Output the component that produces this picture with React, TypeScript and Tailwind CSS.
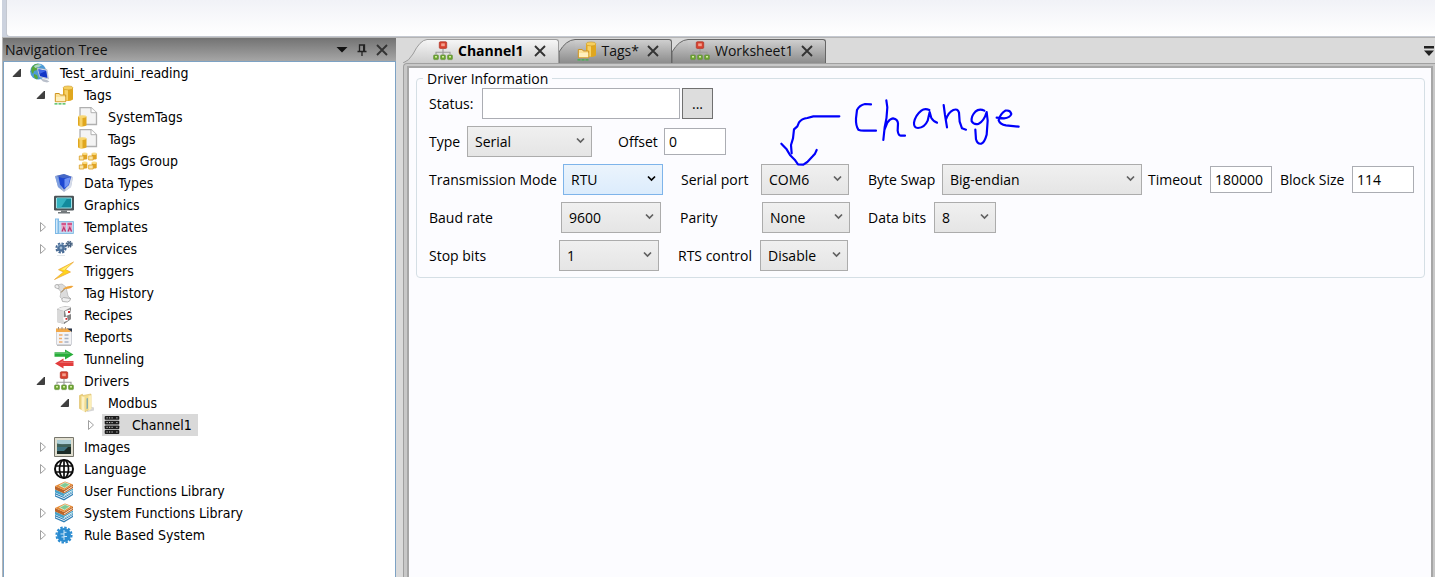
import type { ReactNode } from "react";

/* ---------- icons ---------- */

function Icon({ children }: { children: ReactNode }) {
  return (
    <svg viewBox="0 0 20 20" className="size-5 shrink-0" aria-hidden="true">
      {children}
    </svg>
  );
}

const globeIcon = (
  <Icon>
    <circle cx="8.200" cy="8.500" r="8" fill="#4c9ad6" />
    <path d="M2 4q3-4 7-3l2 2-3 1-1 3-3 1-1 3q-3-3-1-7zM4 11l3 1 1 3-1 1.500q-4-2-3-5.500z" fill="#56a73a" />
    <path d="M4 3q4-3 8-1l-3 2-4 1z" fill="#cfeaff" opacity=".7" />
    <path d="M7 5l10 1.600 1.500 9.400-9-2z" fill="#e7ecf4" stroke="#9fa9bb" strokeWidth=".6" />
    <path d="M8.300 6.300l8 1.400 1.200 7.300-7.500-1.700z" fill="#1236c6" />
    <path d="M8.300 6.300l8 1.400-7 3.300z" fill="#3e67e8" />
    <path d="M10 15.500l6.500 1.200 3 1.800-2.500 1-4-1z" fill="#b9bfca" />
  </Icon>
);

const tagsIcon = (
  <Icon>
    <path d="M9 3v11.500q5 3 10 0V3z" fill="#e0a71f" />
    <path d="M10.500 3.500v12h3.500V4z" fill="#f7d268" />
    <ellipse cx="14" cy="2.900" rx="5" ry="2" fill="#f6cf5e" stroke="#c08a18" strokeWidth=".5" />
    <path d="M1.300 8.500h4l1 1.500h5.400v6.700H1.300z" fill="#fbe29a" stroke="#cf9420" />
    <path d="M2 12h9.200v4.200H2z" fill="#fff0bd" />
    <path d="M.5 18.800h11.500" stroke="#39b54a" strokeWidth="1.300" strokeDasharray="3 1" />
  </Icon>
);

const tagFileIcon = (
  <Icon>
    <path d="M2 .7h11l5.500 5V17.500H2z" fill="#f4f4f4" stroke="#b0b0b0" strokeWidth="1.300" />
    <path d="M13 .7v5h5.500" fill="#fff" stroke="#b0b0b0" />
    <path d="M0 9.500v9q4 2 8.500 0v-9z" fill="#e0a71f" />
    <path d="M1.500 10v9.300h3V10z" fill="#f7d268" />
    <ellipse cx="4.300" cy="9.600" rx="4.200" ry="1.300" fill="#f8d774" />
  </Icon>
);

const cluster = (x: number, y: number) => (
  <g key={`${x}-${y}`} transform={`translate(${x} ${y})`}>
    <path d="M3.500 1.500v5.500q2.500 1 5 0V1.500z" fill="#e0a321" />
    <ellipse cx="6" cy="1.700" rx="2.500" ry="1.200" fill="#f9dc82" />
    <path d="M.5 4H5v4H.5z" fill="#fbe6a5" stroke="#d99d25" strokeWidth=".8" />
  </g>
);

const tagsGroupIcon = (
  <Icon>
    {cluster(0.8, 1)}
    {cluster(10.2, 1)}
    {cluster(0.8, 10)}
    {cluster(10.2, 10)}
  </Icon>
);

const dataTypesIcon = (
  <Icon>
    <path d="M1 3l9-2 9 3-2 10-7 5-6-5z" fill="#a9b6d3" />
    <path d="M1 3l5 2 2 12-4-3z" fill="#7fa0e0" />
    <path d="M15 5l4-1-2 10-6 4z" fill="#d5dbe8" />
    <path d="M4.500 4l6-2 6.500 2-2 8-5 4.500-4-5z" fill="#1c46d2" />
    <path d="M10.500 6l6-2-2 8-4 3z" fill="#6f92f3" />
    <path d="M2 3l8-2 8 3-9 1.200z" fill="#4668c6" />
  </Icon>
);

const monitorIcon = (
  <Icon>
    <rect y=".8" width="20" height="14.700" rx="1.200" fill="#4b5357" />
    <path d="M2.500 3h15v10h-15z" fill="#138a9c" stroke="#9fe1e6" />
    <path d="M3 3.500h10l-6 9H3z" fill="#35b3c1" />
    <path d="M7 15.500h6V17h3v1.500H4V17h3z" fill="#73797c" />
  </Icon>
);

const templatesIcon = (
  <Icon>
    <path d="M4 4.500h15.500v12H4z" fill="#b9dcf5" stroke="#8fc1e5" />
    <path d="M1 1.500h4V17H1z" fill="#7db9e6" />
    <path d="M2.200 2.500h1.200v13.500H2.200z" fill="#e8f5ff" />
    <path d="M7.500 5.500h4.500v9H7.500zM13.500 5.500H18v9h-4.500z" fill="#eba0c0" />
    <path d="M7.500 7h4.500M13.500 7H18" stroke="#c93f7a" strokeWidth="1.500" />
    <path d="M8 14.500l1.800-4 1.800 4M14 14.500l1.800-4 1.800 4" stroke="#b5386f" fill="none" strokeWidth="1.200" />
  </Icon>
);

const servicesIcon = (
  <Icon>
    <circle cx="7" cy="9" r="3.800" fill="#4d7099" />
    <circle cx="7" cy="9" r="4.600" fill="none" stroke="#476a94" strokeWidth="2" strokeDasharray="2.300 1.300" />
    <circle cx="7" cy="9" r="1.400" fill="#a3bcd5" />
    <path d="M3.500 8q1.500-3 5-3" stroke="#8fb1d2" fill="none" />
    <circle cx="15.200" cy="5.300" r="2.300" fill="#46607f" />
    <circle cx="15.200" cy="5.300" r="2.800" fill="none" stroke="#46607f" strokeWidth="1.500" strokeDasharray="1.400 .8" />
    <circle cx="15.200" cy="5.300" r=".8" fill="#9fb7ce" />
    <path d="M3 16.500h8" stroke="#e2e7eb" />
  </Icon>
);

const boltIcon = (
  <Icon>
    <path d="M19.500 1L4.500 8.700l5 2.300L.5 18.500 16.500 11 11.500 8.500z" fill="#ffd41c" stroke="#e9a33b" strokeWidth=".7" />
    <path d="M17.500 2.500L7 8.500l3.500.5z" fill="#ffee70" />
  </Icon>
);

const historyIcon = (
  <Icon>
    <path d="M2 2l6-1 4 3 2 9 3 3-7 2-4-4 1-5-3-4z" fill="#dcdcdc" stroke="#b3b3b3" strokeWidth=".7" />
    <path d="M1 4.500q-1-3 2-3 3 1 1.500 4.500zM8.500 18.500q-2-3 1-4l7 1q0 3-3 3.500z" fill="#efefef" stroke="#9c9c9c" strokeWidth=".7" />
    <path d="M9 5.500q5-3.500 10.500-2.500-3 3.500-9.500 3z" fill="#f0a63c" />
    <path d="M7 9.500l3.500-3.500" stroke="#8b6a3c" />
  </Icon>
);

const recipesIcon = (
  <Icon>
    <path d="M3 4q5-4 14-2v12l-7 5-7-2z" fill="#a9a9a9" />
    <path d="M3 4.500l7 1.500v13l-7-2z" fill="#d9d9d9" />
    <path d="M10 6l7-3v11l-7 5z" fill="#858585" />
    <path d="M11 6l5-1.500 1 4.500-5 2zM9 12.500l4-1 1 4-4 1.500z" fill="#fff" />
    <path d="M14 6h2v2h-2zM11.500 13h1.700v1.700h-1.700z" fill="#d6252b" />
    <path d="M3 4q5-3 14-2l-7 4z" fill="#f0f0f0" />
  </Icon>
);

const reportsIcon = (
  <Icon>
    <path d="M2.500 2h15v15.500h-15z" fill="#f3f3f5" stroke="#d0d2d8" />
    <path d="M2 1.500h12l3 3.500H2z" fill="#f2a94a" />
    <path d="M4.500 0v2.500M8 0v2.500M11.500 0v2.500" stroke="#a18f7d" />
    <path d="M13 1.500h5V5z" fill="#2a3446" />
    <path d="M5 8h3.500M5 11.500h3M5 15h3.500" stroke="#f0ac6b" strokeWidth="1.400" />
    <path d="M10.500 8h4M10.500 11.500h4M10.500 15h4" stroke="#a9b3c4" strokeWidth="1.400" />
    <path d="M3 18.500h14" stroke="#bcbcbc" />
  </Icon>
);

const tunnelingIcon = (
  <Icon>
    <path d="M.5 3.300H11V.5l8.500 5-8.500 5V7.700H.5z" fill="#28ad3a" />
    <path d="M19.500 12H9.500V9.500L1 14.500l8.500 5V17h10z" fill="#e23c3c" />
    <path d="M.5 3.800H11.500V2l5 3H.5zM19.500 12.800H9v-1.500L5 14h14.500z" fill="#fff" opacity=".22" />
  </Icon>
);

const driversIcon = (
  <Icon>
    <path d="M10 8v3M3 13.500V11.300h14v2.200M10 11v3" fill="none" stroke="#9a9a9a" strokeWidth="1.100" />
    <rect x="6.300" y=".8" width="7.400" height="6.600" rx="1" fill="#d8412f" stroke="#b23a2c" strokeWidth=".8" />
    <rect x="8.200" y="2.400" width="3.600" height="2.800" fill="#f4a28f" />
    {[0.6, 7.6, 14.6].map((x) => (
      <g key={x}>
        <rect x={x} y="14" width="4.800" height="4.600" rx=".8" fill="#6aa52e" stroke="#6a9143" strokeWidth=".7" />
        <rect x={x + 1.4} y="15" width="2" height="1.600" fill="#d3ec9f" />
      </g>
    ))}
  </Icon>
);

const folderIcon = (
  <Icon>
    <path d="M10 13l6 1.500v3l-7 1.500z" fill="#d5d5d5" />
    <path d="M1.500 2.500l3-1.300V17l-3-1.500z" fill="#ecd07a" stroke="#dcbc62" strokeWidth=".6" />
    <path d="M5 2.500l8-1.500v14l-6 4z" fill="#f4dd8d" stroke="#d9bb66" strokeWidth=".6" />
    <path d="M8.500 5.500l1.500-.5v10.500l-1.500.7z" fill="#86acab" />
    <path d="M10.500 3l3-1v14l-3 2z" fill="#fbeeb8" />
    <path d="M3.500 3l3 1v15l-3-2z" fill="#fdf2c4" />
  </Icon>
);

const serverIcon = (
  <Icon>
    {[1, 5.7, 10.4, 15.1].map((y) => (
      <g key={y}>
        <rect x="2.700" y={y} width="14.600" height="3.800" rx=".9" fill="#1c1c1c" />
        <path
          d={`M4.500 ${y + 1.9}h1.200M7 ${y + 1.9}h1.200M9.500 ${y + 1.9}h1.200M14.300 ${y + 1.9}h1.200`}
          stroke="#d6d6d6"
        />
      </g>
    ))}
  </Icon>
);

const imagesIcon = (
  <Icon>
    <path d="M.5.5h19v19H.5z" fill="#e0decf" stroke="#77766c" />
    <path d="M3 3h14v14H3z" fill="#1c2c27" />
    <path d="M3 3h14v4.500H3z" fill="#a9cdd6" />
    <path d="M3 6.500l5 1 9-.5V10H3z" fill="#40635a" />
    <path d="M3 10h11l-4 4H3z" fill="#3f7380" />
  </Icon>
);

const languageIcon = (
  <Icon>
    <g fill="none" stroke="#0b0b0b" strokeWidth="1.700">
      <circle cx="10" cy="10" r="9" strokeWidth="2" />
      <ellipse cx="10" cy="10" rx="4.500" ry="9" />
      <path d="M10 1v18M1 7h18M1 13h18" />
    </g>
  </Icon>
);

const libraryIcon = (
  <Icon>
    <path d="M1 12l9 4 9-5v3l-9 5.500-9-4z" fill="#2f7fb5" />
    <path d="M1.500 14l8.500 3.500 8.500-5" stroke="#e8f3fa" fill="none" />
    <path d="M1 8.500l9 4 9-5v3l-9 5-9-4z" fill="#48a3c9" />
    <path d="M10 14.500l8.500-5" stroke="#f3f8fb" fill="none" />
    <path d="M1 5l9 4 9-5.500v3.500l-9 5.500-9-4z" fill="#b9652b" />
    <path d="M10 11l8.500-5.500" stroke="#fbe6cf" fill="none" />
    <path d="M1 5l10-4.500 8 3L10 9z" fill="#e88c38" />
    <path d="M5.500 4.500l5.500-3 5 2-5.500 3.500z" fill="#7fca95" stroke="#e7f6e4" strokeWidth=".7" />
  </Icon>
);

const ruleIcon = (
  <Icon>
    <circle cx="10" cy="10" r="7" fill="#2a8bd0" />
    <circle cx="10" cy="10" r="7.600" fill="none" stroke="#2a8bd0" strokeWidth="2" strokeDasharray="2.400 1.580" />
    <path d="M10 5v10M6.500 9h3.500M10 7.300h2.500M10 11.500h3M7.500 12h2.500" stroke="#cfe7f8" />
  </Icon>
);

const CloseGlyph = () => (
  <svg viewBox="0 0 12 12" className="size-3" aria-hidden="true">
    <path d="M1 1l10 10M11 1L1 11" stroke="#333" strokeWidth="1.900" />
  </svg>
);

/* ---------- navigation tree ---------- */

type Node = {
  label: string;
  icon: ReactNode;
  level: 0 | 1 | 2 | 3;
  state?: "open" | "closed";
  selected?: boolean;
};

const nodes: Node[] = [
  { label: "Test_arduini_reading", icon: globeIcon, level: 0, state: "open" },
  { label: "Tags", icon: tagsIcon, level: 1, state: "open" },
  { label: "SystemTags", icon: tagFileIcon, level: 2 },
  { label: "Tags", icon: tagFileIcon, level: 2 },
  { label: "Tags Group", icon: tagsGroupIcon, level: 2 },
  { label: "Data Types", icon: dataTypesIcon, level: 1 },
  { label: "Graphics", icon: monitorIcon, level: 1 },
  { label: "Templates", icon: templatesIcon, level: 1, state: "closed" },
  { label: "Services", icon: servicesIcon, level: 1, state: "closed" },
  { label: "Triggers", icon: boltIcon, level: 1 },
  { label: "Tag History", icon: historyIcon, level: 1 },
  { label: "Recipes", icon: recipesIcon, level: 1 },
  { label: "Reports", icon: reportsIcon, level: 1 },
  { label: "Tunneling", icon: tunnelingIcon, level: 1 },
  { label: "Drivers", icon: driversIcon, level: 1, state: "open" },
  { label: "Modbus", icon: folderIcon, level: 2, state: "open" },
  { label: "Channel1", icon: serverIcon, level: 3, state: "closed", selected: true },
  { label: "Images", icon: imagesIcon, level: 1, state: "closed" },
  { label: "Language", icon: languageIcon, level: 1, state: "closed" },
  { label: "User Functions Library", icon: libraryIcon, level: 1 },
  { label: "System Functions Library", icon: libraryIcon, level: 1, state: "closed" },
  { label: "Rule Based System", icon: ruleIcon, level: 1, state: "closed" },
];

const indents = ["pl-2", "pl-8", "pl-14", "pl-20"];

function TreeRow({ node }: { node: Node }) {
  return (
    <li className={`flex h-[22px] items-center ${indents[node.level]}`}>
      <span className="w-[18px] shrink-0">
        {node.state === "open" && (
          <svg viewBox="0 0 10 10" className="size-[10px]" aria-hidden="true">
            <path d="M8.500 1v7.500H1z" fill="#404040" stroke="#262626" strokeWidth=".8" />
          </svg>
        )}
        {node.state === "closed" && (
          <svg viewBox="0 0 10 10" className="size-[10px]" aria-hidden="true">
            <path d="M4.500 .5v9L9.500 5z" fill="#fff" stroke="#a0a0a0" />
          </svg>
        )}
      </span>
      <button
        type="button"
        className={`flex h-[22px] items-center gap-[10px] pr-[6px] whitespace-nowrap ${
          node.selected ? "bg-[#d9d9d9]" : ""
        }`}
      >
        {node.icon}
        {node.label}
      </button>
    </li>
  );
}

function NavigationPanel() {
  return (
    <aside className="ml-[3px] flex w-[393px] shrink-0 flex-col">
      <header className="flex h-[23px] items-center bg-linear-to-b from-[#737373] to-[#a6a6a6] pt-px pr-2 pl-[2px]">
        <h2 className="flex-1 text-[14px] leading-5 text-[#111]">Navigation Tree</h2>
        <div className="flex items-center gap-2">
          <button type="button" aria-label="Panel menu">
            <svg viewBox="0 0 12 12" className="size-3" aria-hidden="true">
              <path d="M.5 3h11L6 8.500z" fill="#111" />
            </svg>
          </button>
          <button type="button" aria-label="Pin panel">
            <svg viewBox="0 0 12 12" className="size-3" aria-hidden="true">
              <path d="M3.500 7V1h5v6M1.500 7.500h9M6 8v4" fill="none" stroke="#222" strokeWidth="1.300" />
              <path d="M7 1h1.500v6H7z" fill="#222" />
            </svg>
          </button>
          <button type="button" aria-label="Close panel">
            <CloseGlyph />
          </button>
        </div>
      </header>
      <nav aria-label="Project" className="flex-1 border-x border-t border-[#7da2c4] bg-white">
        <ul className="font-['DejaVu_Sans_Condensed','Noto_Sans',sans-serif] text-[14px] leading-5 text-black">
          {nodes.map((n, i) => (
            <TreeRow key={i} node={n} />
          ))}
        </ul>
      </nav>
    </aside>
  );
}

/* ---------- document tabs ---------- */

function Tab({ label, icon, active = false }: { label: string; icon: ReactNode; active?: boolean }) {
  const id = active ? "slope-active" : `slope-${label.length}`;
  return (
    <div className="flex h-6">
      <svg
        viewBox={active ? "0 0 24 24" : "0 0 16 24"}
        className={active ? "h-6 w-6" : "h-6 w-4"}
        aria-hidden="true"
      >
        <defs>
          <linearGradient id={id} x1="0" y1="0" x2="0" y2="24" gradientUnits="userSpaceOnUse">
            <stop stopColor={active ? "#f6f6f6" : "#cfcfcf"} />
            <stop offset="1" stopColor={active ? "#cdcdcd" : "#8c8c8c"} />
          </linearGradient>
        </defs>
        <path
          d={active ? "M0 24Q6 22 10 15Q17 1 24 .5V24z" : "M0 24V13Q7 1 16 .5V24z"}
          fill={`url(#${id})`}
        />
        <path
          d={active ? "M0 24Q6 22 10 15Q17 1 24 .5" : "M0 24V13Q7 1 16 .5"}
          fill="none"
          stroke={active ? "#9c9c9c" : "#666"}
        />
      </svg>
      <div
        className={`flex items-center rounded-tr-[3px] border-t border-r pr-3 pb-[2px] ${
          active
            ? "gap-[10px] border-[#9c9c9c] bg-linear-to-b from-[#f6f6f6] to-[#cdcdcd] pl-[6px]"
            : "gap-2 border-[#666] bg-linear-to-b from-[#cfcfcf] to-[#8c8c8c] pl-[2px]"
        }`}
      >
        <button
          type="button"
          className={`flex items-center gap-[5px] text-[14px] leading-5 ${active ? "font-bold text-black" : "text-[#111]"}`}
        >
          {icon}
          {label}
        </button>
        <button type="button" aria-label={`Close ${label}`}>
          <CloseGlyph />
        </button>
      </div>
    </div>
  );
}

/* ---------- form controls ---------- */

function Label({ id, text, width }: { id: string; text: string; width: string }) {
  return (
    <label htmlFor={id} className={`${width} shrink-0 whitespace-nowrap`}>
      {text}
    </label>
  );
}

function Select({ id, value, width, hot = false }: { id: string; value: string; width: string; hot?: boolean }) {
  return (
    <span className={`relative h-[31px] shrink-0 ${width}`}>
      <select
        id={id}
        defaultValue={value}
        className={`h-full w-full appearance-none border pl-[7px] ${
          hot
            ? "border-[#7eb4ea] bg-linear-to-b from-[#ebf4fc] to-[#dcecfc]"
            : "border-[#acacac] bg-linear-to-b from-[#f0f0f0] to-[#e5e5e5]"
        }`}
      >
        <option>{value}</option>
      </select>
      <svg viewBox="0 0 10 8" className="pointer-events-none absolute top-[11px] right-[6px] h-2 w-[10px]" aria-hidden="true">
        <path d="M1 1.500L4.500 5 8 1.500" fill="none" stroke={hot ? "#000" : "#606060"} strokeWidth="1.700" />
      </svg>
    </span>
  );
}

function NumberBox({ id, value }: { id: string; value: string }) {
  return (
    <input
      id={id}
      defaultValue={value}
      className="h-[27px] w-[62px] shrink-0 border border-[#abadb3] bg-white pl-1"
    />
  );
}

const Row = ({ children }: { children: ReactNode }) => <div className="flex h-[31px] items-center">{children}</div>;

function InkNote() {
  return (
    <svg
      viewBox="321 21 735 213"
      role="img"
      aria-label="Handwritten note: Change"
      className="pointer-events-none absolute top-2 left-[360px] h-[71px] w-[245px]"
    >
      <g fill="none" stroke="#0000fb" strokeWidth="6.500" strokeLinecap="round" strokeLinejoin="round">
        <path d="M508 79H430L412 84Q395 86 387 97L382 109 372 118 369 145 363 165 365 190" />
        <path d="M334 161L350 178 360 195 374 209 384 223 400 224 412 216 428 199 435 191 440 180" />
        <path d="M603 43L585 42Q568 46 561 60L558 85Q557 106 565 119 571 122 582 122H618" />
        <path d="M649 31L652 52Q651 85 644 112L640 150M643 120L652 98Q660 86 669 85 683 87 684 100L683 122Q685 137 692 137H705" />
        <path d="M778 60Q764 54 754 62 736 76 732 98 731 114 744 114 764 113 773 92L779 66 784 84Q792 96 801 98" />
        <path d="M821 45L825 75 831 112M828 88Q836 66 850 60 863 55 867 68L869 95 876 115 888 119" />
        <path d="M943 62Q928 54 916 65 903 78 905 94 911 105 925 102 942 94 950 66L953 92 950 134Q943 159 934 161 922 163 918 148L916 119" />
        <path d="M980 83L1002 85Q1020 84 1024 72 1021 59 1006 62 990 72 986 91 990 103 1008 106L1046 110" />
      </g>
    </svg>
  );
}

function DriverForm() {
  return (
    <fieldset className="relative mr-[6px] ml-[7px] min-w-0 rounded-[4px] border border-[#d5dfe5] pb-[6px] pl-3">
      <legend className="-ml-[6px] h-[21px] px-1 leading-[22px]">Driver Information</legend>
      <div className="-mt-[1px] flex flex-col gap-[7px]">
        <Row>
          <Label id="status" text="Status:" width="w-[53px]" />
          <input id="status" className="h-[31px] w-[198px] border border-[#abadb3] bg-white px-1" />
          <button type="button" aria-label="Browse status" className="ml-[2px] h-[31px] w-[31px] border border-[#707070] bg-[#dddddd]">
            ...
          </button>
        </Row>
        <Row>
          <Label id="type" text="Type" width="w-[38px]" />
          <Select id="type" value="Serial" width="w-[125px]" />
          <span className="w-[26px]" />
          <Label id="offset" text="Offset" width="w-[46px]" />
          <NumberBox id="offset" value="0" />
        </Row>
        <Row>
          <Label id="mode" text="Transmission Mode" width="w-[134px]" />
          <Select id="mode" value="RTU" width="w-[100px]" hot />
          <span className="w-[18px]" />
          <Label id="port" text="Serial port" width="w-[80px]" />
          <Select id="port" value="COM6" width="w-[88px]" />
          <span className="w-[19px]" />
          <Label id="swap" text="Byte Swap" width="w-[74px]" />
          <Select id="swap" value="Big-endian" width="w-[200px]" />
          <span className="w-[6px]" />
          <Label id="timeout" text="Timeout" width="w-[62px]" />
          <NumberBox id="timeout" value="180000" />
          <span className="w-2" />
          <Label id="block" text="Block Size" width="w-[72px]" />
          <NumberBox id="block" value="114" />
        </Row>
        <Row>
          <Label id="baud" text="Baud rate" width="w-[132px]" />
          <Select id="baud" value="9600" width="w-[100px]" />
          <span className="w-[19px]" />
          <Label id="parity" text="Parity" width="w-[82px]" />
          <Select id="parity" value="None" width="w-[88px]" />
          <span className="w-[18px]" />
          <Label id="databits" text="Data bits" width="w-[66px]" />
          <Select id="databits" value="8" width="w-[62px]" />
        </Row>
        <Row>
          <Label id="stopbits" text="Stop bits" width="w-[130px]" />
          <Select id="stopbits" value="1" width="w-[100px]" />
          <span className="w-[19px]" />
          <Label id="rts" text="RTS control" width="w-[82px]" />
          <Select id="rts" value="Disable" width="w-[88px]" />
        </Row>
      </div>
      <InkNote />
    </fieldset>
  );
}

/* ---------- page ---------- */

export default function App() {
  return (
    <div className="flex min-h-screen flex-col bg-white font-['Open_Sans','Noto_Sans',sans-serif] text-[14px] leading-5 text-black">
      <div className="ml-[2px] h-[37px] bg-[#ccd2de]">
        <div className="ml-1 h-full rounded-bl-[4px] border-b border-l border-[#c4c8d0] bg-linear-to-b from-[#f1f2f7] to-white" />
      </div>
      <div className="ml-[2px] flex flex-1 border-t border-l border-[#b4b4b4] bg-[#dadada]">
        <div className="-ml-[3px] flex min-w-0 flex-1">
          <NavigationPanel />
          <main className="ml-[7px] flex min-w-0 flex-1 flex-col">
            <div className="flex items-end justify-between pt-[1px]">
              <div className="flex">
                <Tab label="Channel1" icon={driversIcon} active />
                <Tab label="Tags*" icon={tagsIcon} />
                <Tab label="Worksheet1" icon={driversIcon} />
              </div>
              <button type="button" aria-label="Open documents" className="mb-[6px]">
                <svg viewBox="0 0 12 12" className="size-3" aria-hidden="true">
                  <path d="M1 1h10v2.500H1zM1 5.500h10L6 11z" fill="#222" />
                </svg>
              </button>
            </div>
            <div className="flex flex-1 flex-col rounded-tl-[4px] border-t border-l border-[#a0a0a0] bg-[#c8c8c8] pt-[2px] pr-[2px] pl-[3px]">
              <div className="flex-1 border-x-2 border-t-2 border-[#a6a6a6] bg-[#fcfcff]">
                <DriverForm />
              </div>
            </div>
          </main>
        </div>
      </div>
    </div>
  );
}
